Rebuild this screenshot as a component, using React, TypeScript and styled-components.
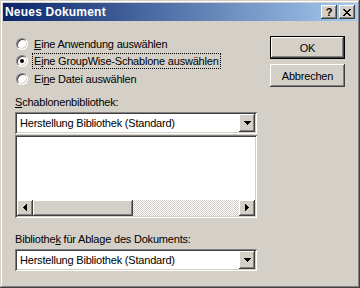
import React from 'react';
import styled, {createGlobalStyle, css} from 'styled-components';

const GlobalStyle = createGlobalStyle`
  html, body {
    margin: 0;
    padding: 0;
    background: #d4d0c8;
  }
  body {
    font-family: "Liberation Sans", Arial, sans-serif;
    font-size: 11px;
    letter-spacing: -0.2px;
    color: #000;
  }
`

const raised = css`
  box-shadow: inset -1px -1px #404040, inset 1px 1px #fff, inset -2px -2px #808080, inset 2px 2px #d4d0c8;
`

const sunken = css`
  box-shadow: inset 1px 1px #808080, inset -1px -1px #fff, inset 2px 2px #404040, inset -2px -2px #d4d0c8;
`

const Window = styled.div`
  width: 360px;
  height: 288px;
  box-sizing: border-box;
  padding: 3px;
  background: #d4d0c8;
  box-shadow: inset -1px -1px #404040, inset 1px 1px #d4d0c8, inset -2px -2px #808080, inset 2px 2px #fff;
  display: flex;
  flex-direction: column;
`

const TitleBar = styled.div`
  height: 18px;
  display: flex;
  align-items: center;
  padding: 0 2px 0 2px;
  background: linear-gradient(to right, #0a246a, #a6caf0);
`

const Title = styled.div`
  flex: 1;
  color: #fff;
  font-weight: bold;
  font-size: 12px;
  letter-spacing: 0.2px;
`

const CapButton = styled.div<{gap?: number}>`
  width: 16px;
  height: 14px;
  margin-left: ${p => p.gap || 0}px;
  background: #d4d0c8;
  ${raised};
  display: flex;
  align-items: center;
  justify-content: center;
  font-weight: bold;
  font-size: 11px;
`

const Body = styled.div`
  flex: 1;
  display: flex;
  padding: 14px 12px 0 12px;
`

const LeftCol = styled.div`
  width: 242px;
  display: flex;
  flex-direction: column;
`

const RightCol = styled.div`
  margin-left: auto;
  display: flex;
  flex-direction: column;
  gap: 5px;
  padding-top: 1px;
`

const RadioRow = styled.div`
  height: 17.5px;
  display: flex;
  align-items: center;
  padding-left: 1px;
`

const RadioCircle = styled.div<{checked?: boolean}>`
  width: 12px;
  height: 12px;
  box-sizing: border-box;
  border-radius: 50%;
  border: 1px solid;
  border-color: #808080 #fff #fff #808080;
  background: #fff;
  box-shadow: inset 1px 1px #404040, inset -1px -1px #d4d0c8;
  display: flex;
  align-items: center;
  justify-content: center;
  &::after {
    content: '';
    width: 4px;
    height: 4px;
    border-radius: 50%;
    background: ${p => (p.checked ? '#000' : 'transparent')};
  }
`

const RadioLabel = styled.span<{focused?: boolean}>`
  margin-left: 5px;
  padding: 1px 1px;
  outline: ${p => (p.focused ? '1px dotted #000' : 'none')};
  white-space: nowrap;
`

const FieldLabel = styled.div<{top: number}>`
  margin-top: ${p => p.top}px;
  height: 15px;
  line-height: 15px;
`

const Combo = styled.div<{top?: number}>`
  margin-top: ${p => p.top || 0}px;
  height: 22px;
  box-sizing: border-box;
  background: #fff;
  ${sunken};
  padding: 2px;
  display: flex;
  align-items: center;
`

const ComboText = styled.div`
  flex: 1;
  padding-left: 3px;
  white-space: nowrap;
`

const DropButton = styled.div`
  width: 16px;
  height: 18px;
  background: #d4d0c8;
  ${raised};
  display: flex;
  align-items: center;
  justify-content: center;
`

const ListBox = styled.div`
  margin-top: 1px;
  height: 83px;
  box-sizing: border-box;
  background: #fff;
  ${sunken};
  padding: 2px;
  display: flex;
  flex-direction: column;
`

const ListArea = styled.div`
  flex: 1;
`

const HScroll = styled.div`
  height: 16px;
  display: flex;
`

const ScrollBtn = styled.div`
  width: 16px;
  height: 16px;
  background: #d4d0c8;
  ${raised};
  display: flex;
  align-items: center;
  justify-content: center;
`

const Thumb = styled.div`
  width: 100px;
  height: 16px;
  background: #d4d0c8;
  ${raised};
`

const Track = styled.div`
  flex: 1;
  background-color: #fff;
  background-image: linear-gradient(45deg, #d4d0c8 25%, transparent 25%, transparent 75%, #d4d0c8 75%),
    linear-gradient(45deg, #d4d0c8 25%, transparent 25%, transparent 75%, #d4d0c8 75%);
  background-size: 2px 2px;
  background-position: 0 0, 1px 1px;
`

const PushButton = styled.div<{isDefault?: boolean}>`
  width: 75px;
  height: 23px;
  box-sizing: border-box;
  background: #d4d0c8;
  display: flex;
  align-items: center;
  justify-content: center;
  ${p =>
    p.isDefault
      ? css`
          border: 1px solid #000;
          box-shadow: inset -1px -1px #404040, inset 1px 1px #fff, inset -2px -2px #808080;
        `
      : raised};
`

const Arrow = ({dir}: {dir: 'down' | 'left' | 'right'}) => {
  const pts =
    dir === 'down' ? '0,0 7,0 3.5,4' : dir === 'left' ? '4,0 4,7 0,3.5' : '0,0 0,7 4,3.5';
  const w = dir === 'down' ? 7 : 4;
  const h = dir === 'down' ? 4 : 7;
  return (
    <svg width={w} height={h} viewBox={`0 0 ${w} ${h}`} shapeRendering="crispEdges">
      <polygon points={pts} fill="#000" />
    </svg>
  );
};

function Radio({checked, focused, children}: {checked?: boolean; focused?: boolean; children: React.ReactNode}) {
  return (
    <RadioRow>
      <RadioCircle checked={checked} />
      <RadioLabel focused={focused}>{children}</RadioLabel>
    </RadioRow>
  );
}

function ComboBox({text, top}: {text: string; top?: number}) {
  return (
    <Combo top={top}>
      <ComboText>{text}</ComboText>
      <DropButton>
        <Arrow dir="down" />
      </DropButton>
    </Combo>
  );
}

export default function App() {
  return (
    <>
      <GlobalStyle />
      <Window>
        <TitleBar>
          <Title>Neues Dokument</Title>
          <CapButton>?</CapButton>
          <CapButton gap={2}>
            <svg width="8" height="7" viewBox="0 0 8 7" shapeRendering="crispEdges">
              <path d="M0 0h2v1h-2zM6 0h2v1h-2zM1 1h2v1h-2zM5 1h2v1h-2zM2 2h4v1h-4zM3 3h2v1h-2zM2 4h4v1h-4zM1 5h2v1h-2zM5 5h2v1h-2zM0 6h2v1h-2zM6 6h2v1h-2z" fill="#000" />
            </svg>
          </CapButton>
        </TitleBar>
        <Body>
          <LeftCol>
            <Radio>
              <u>E</u>ine Anwendung auswählen
            </Radio>
            <Radio checked focused>
              E<u>i</u>ne GroupWise-Schablone auswählen
            </Radio>
            <Radio>
              Ei<u>n</u>e Datei auswählen
            </Radio>
            <FieldLabel top={7}>
              <u>S</u>chablonenbibliothek:
            </FieldLabel>
            <ComboBox text="Herstellung Bibliothek (Standard)" top={2} />
            <ListBox>
              <ListArea />
              <HScroll>
                <ScrollBtn>
                  <Arrow dir="left" />
                </ScrollBtn>
                <Thumb />
                <Track />
                <ScrollBtn>
                  <Arrow dir="right" />
                </ScrollBtn>
              </HScroll>
            </ListBox>
            <FieldLabel top={14}>
              Bibliothe<u>k</u> für Ablage des Dokuments:
            </FieldLabel>
            <ComboBox text="Herstellung Bibliothek (Standard)" top={2} />
          </LeftCol>
          <RightCol>
            <PushButton isDefault>OK</PushButton>
            <PushButton>Abbrechen</PushButton>
          </RightCol>
        </Body>
      </Window>
    </>
  );
}
